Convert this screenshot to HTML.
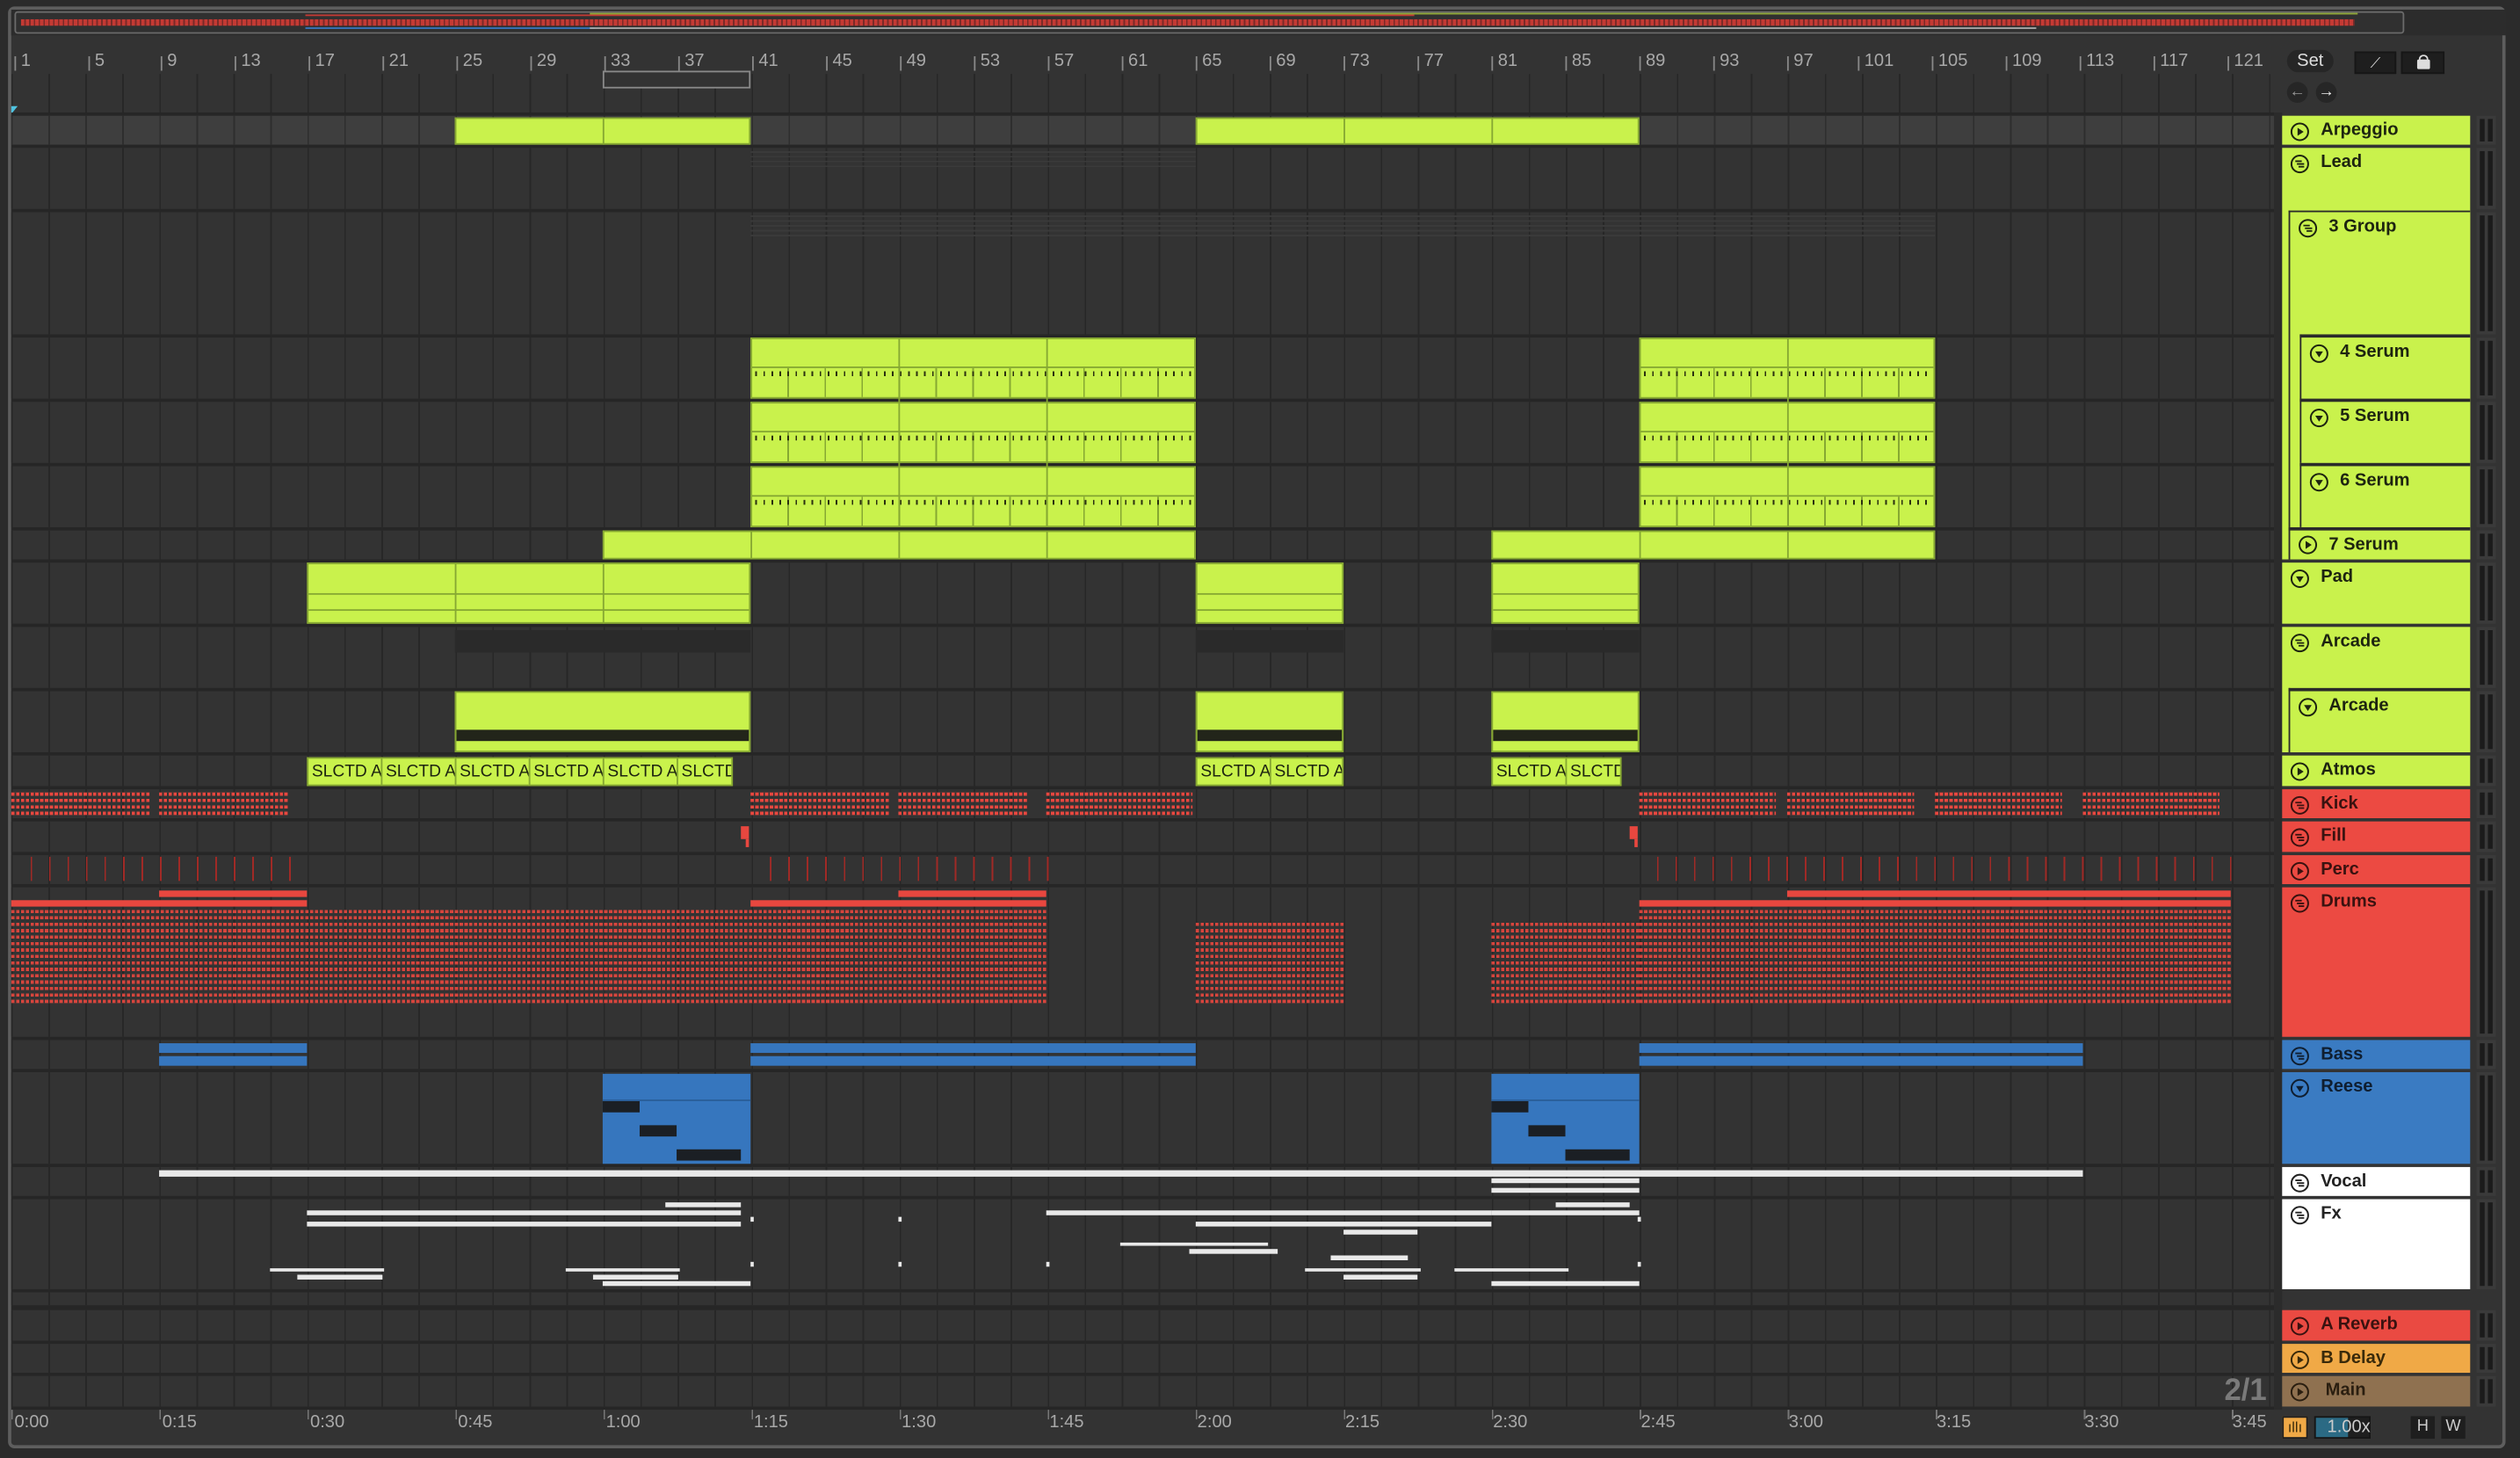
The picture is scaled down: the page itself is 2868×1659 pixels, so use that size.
<!DOCTYPE html>
<html><head><meta charset="utf-8"><style>
*{margin:0;padding:0;box-sizing:border-box}
html,body{width:2868px;height:1658px;overflow:hidden;background:#2b2b2b}
#s{position:absolute;left:0;top:0;width:1568px;height:907px;transform:scale(1.82908);transform-origin:0 0;background:#2b2b2b;font-family:"Liberation Sans",sans-serif}
.a{position:absolute}
.row{position:absolute;left:7px;width:1408px;background-color:#333;background-image:repeating-linear-gradient(to right,#272727 0 1px,transparent 1px 23.03px)}
.l{position:absolute;background:#c9f24c;border:1px solid #86a832}
.r{position:absolute;background:#e8473f}
.b{position:absolute;background:#3676be}
.w{position:absolute;background:#e9e9e9}
.h{position:absolute;font-weight:bold;font-size:11px;color:#1d2410;padding-left:24px;line-height:19px}
.h svg{position:absolute;left:5px;top:4px;width:12px;height:12px}
.m{position:absolute;left:1541px;width:12px;background:#3a3a3a}
.m:before,.m:after{content:"";position:absolute;top:2px;bottom:2px;width:3px;background:#1b1b1b}
.m:before{left:2px}.m:after{left:7px}
.rn{position:absolute;top:32px;font-size:11px;color:#a8a8a8}
.rn:before{content:"";position:absolute;left:-4px;top:3px;width:1px;height:9px;background:#888}
.tn{position:absolute;top:879px;font-size:11px;color:#a8a8a8}
.sl{position:absolute;top:471px;height:18px;background:#c9f24c;border:1px solid #86a832;font-size:10.5px;color:#1d2410;line-height:16px;padding-left:2px;overflow:hidden;white-space:nowrap}
.notes{position:absolute;left:0;right:0;bottom:0;height:19px;border-top:1px solid #86a832;background-image:repeating-linear-gradient(to right,transparent 0 2px,#2a3010 2px 3px,transparent 3px 5px),repeating-linear-gradient(to right,transparent 0 22px,#86a832 22px 23px);background-size:100% 3px,100% 100%;background-repeat:repeat-x,repeat;background-position:0 2px,0 0}
.dr{position:absolute;background-image:repeating-linear-gradient(to right,transparent 0 2px,#333 2px 3px),repeating-linear-gradient(to bottom,#e8473f 0 2px,transparent 2px 4px)}
.pc{position:absolute;top:533px;height:15px;background-image:repeating-linear-gradient(to right,#a02a26 0 1px,transparent 1px 11.5px)}
</style></head><body><div id="s">
<svg width="0" height="0" style="position:absolute">
<symbol id="p" viewBox="0 0 12 12"><circle cx="6" cy="6" r="5.2" fill="none" stroke="currentColor" stroke-width="1.1"/><path d="M4.6 3.5L8.4 6 4.6 8.5z" fill="currentColor"/></symbol>
<symbol id="g" viewBox="0 0 12 12"><circle cx="6" cy="6" r="5.2" fill="none" stroke="currentColor" stroke-width="1.1"/><path d="M3.2 4.3h4M4.2 6h4.5M5.2 7.7h3.5" stroke="currentColor" stroke-width="1"/></symbol>
<symbol id="d" viewBox="0 0 12 12"><circle cx="6" cy="6" r="5.2" fill="none" stroke="currentColor" stroke-width="1.1"/><path d="M3.6 4.6h4.8L6 8.3z" fill="currentColor"/></symbol>
</svg>
<!-- frame -->
<div class="a" style="left:5px;top:4px;width:1554px;height:897px;border:2px solid #5e5e5e;border-radius:4px;background:#333"></div>
<div class="a" style="left:7px;top:6px;width:1552px;height:16px;background:#2c2c2c"></div>
<!-- overview -->
<div class="a" style="left:9px;top:7px;width:1487px;height:14px;border:1px solid #6a6a6a;border-radius:2px;background:#303030"></div>
<div class="a" style="left:13px;top:12px;width:1452px;height:4px;background-image:repeating-linear-gradient(to right,#c43a34 0 2px,#7a2a28 2px 3px)"></div>
<div class="a" style="left:190px;top:9px;width:690px;height:1px;background:#c43a34"></div>
<div class="a" style="left:367px;top:9px;width:1100px;height:1px;background:#8fa838;top:8px"></div>
<div class="a" style="left:190px;top:17px;width:180px;height:1px;background:#3676be"></div>
<div class="a" style="left:367px;top:17px;width:900px;height:1px;background:#aaa"></div>
<!-- ruler -->
<div class="rn" style="left:13px">1</div><div class="rn" style="left:59px">5</div><div class="rn" style="left:104px">9</div><div class="rn" style="left:150px">13</div><div class="rn" style="left:196px">17</div><div class="rn" style="left:242px">21</div><div class="rn" style="left:288px">25</div><div class="rn" style="left:334px">29</div><div class="rn" style="left:380px">33</div><div class="rn" style="left:426px">37</div><div class="rn" style="left:472px">41</div><div class="rn" style="left:518px">45</div><div class="rn" style="left:564px">49</div><div class="rn" style="left:610px">53</div><div class="rn" style="left:656px">57</div><div class="rn" style="left:702px">61</div><div class="rn" style="left:748px">65</div><div class="rn" style="left:794px">69</div><div class="rn" style="left:840px">73</div><div class="rn" style="left:886px">77</div><div class="rn" style="left:932px">81</div><div class="rn" style="left:978px">85</div><div class="rn" style="left:1024px">89</div><div class="rn" style="left:1070px">93</div><div class="rn" style="left:1116px">97</div><div class="rn" style="left:1160px">101</div><div class="rn" style="left:1206px">105</div><div class="rn" style="left:1252px">109</div><div class="rn" style="left:1298px">113</div><div class="rn" style="left:1344px">117</div><div class="rn" style="left:1390px">121</div>
<div class="a" style="left:7px;top:46px;width:1408px;height:24px;background-image:repeating-linear-gradient(to right,#272727 0 1px,transparent 1px 23.03px)"></div>
<div class="a" style="left:375px;top:44px;width:92px;height:11px;border:1px solid #8a8a8a;background:#333"></div>
<div class="a" style="left:7px;top:66px;width:0;height:0;border-left:4px solid #4fc3e0;border-bottom:5px solid transparent"></div>
<!-- right controls -->
<div class="a" style="left:1423px;top:31px;width:29px;height:14px;border-radius:7px;background:#262626;color:#ddd;font-size:11px;text-align:center;line-height:14px">Set</div>
<div class="a" style="left:1465px;top:32px;width:26px;height:14px;background:#1e1e1e;border:1px solid #161616;color:#ddd;font-size:9px;text-align:center;line-height:12px">⟋</div>
<div class="a" style="left:1494px;top:32px;width:27px;height:14px;background:#1e1e1e;border:1px solid #161616"><div class="a" style="left:9px;top:4px;width:8px;height:6px;background:#ddd;border-radius:1px"></div><div class="a" style="left:10px;top:1px;width:6px;height:5px;border:1.5px solid #ddd;border-bottom:0;border-radius:3px 3px 0 0"></div></div>
<div class="a" style="left:1423px;top:51px;width:13px;height:13px;border-radius:50%;background:#262626;color:#999;font-size:10px;text-align:center;line-height:13px">←</div>
<div class="a" style="left:1441px;top:51px;width:13px;height:13px;border-radius:50%;background:#262626;color:#eee;font-size:10px;text-align:center;line-height:13px">→</div>
<!-- arrangement bg -->
<div class="a" style="left:7px;top:70px;width:1408px;height:807px;background:#262626"></div>
<div class="row" style="top:72px;height:18px;background-color:#3e3e3e;background-image:repeating-linear-gradient(to right,#2e2e2e 0 1px,transparent 1px 23.03px)"></div>
<div class="row" style="top:92px;height:38px"></div>
<div class="row" style="top:132px;height:76px"></div>
<div class="row" style="top:210px;height:38px"></div>
<div class="row" style="top:250px;height:38px"></div>
<div class="row" style="top:290px;height:38px"></div>
<div class="row" style="top:330px;height:18px"></div>
<div class="row" style="top:350px;height:38px"></div>
<div class="row" style="top:390px;height:38px"></div>
<div class="row" style="top:430px;height:38px"></div>
<div class="row" style="top:470px;height:19px"></div>
<div class="row" style="top:491px;height:18px"></div>
<div class="row" style="top:511px;height:19px"></div>
<div class="row" style="top:532px;height:18px"></div>
<div class="row" style="top:552px;height:93px"></div>
<div class="row" style="top:647px;height:18px"></div>
<div class="row" style="top:667px;height:57px"></div>
<div class="row" style="top:726px;height:18px"></div>
<div class="row" style="top:746px;height:56px"></div>
<div class="row" style="top:804px;height:8px"></div>
<div class="row" style="top:815px;height:19px"></div>
<div class="row" style="top:836px;height:18px"></div>
<div class="row" style="top:856px;height:19px"></div>
<div class="a" style="left:1415px;top:70px;width:5px;height:807px;background:#2b2b2b"></div>
<!-- faint lead -->
<div class="a" style="left:467px;top:94px;width:277px;height:12px;background:repeating-linear-gradient(to bottom,#3a3a3a 0 1px,transparent 1px 3px)"></div>
<div class="a" style="left:467px;top:134px;width:737px;height:14px;background:repeating-linear-gradient(to bottom,#3a3a3a 0 1px,transparent 1px 3px)"></div>
<div class="a" style="left:283px;top:392px;width:184px;height:14px;background:#2a2a2a"></div>
<div class="a" style="left:744px;top:392px;width:92px;height:14px;background:#2a2a2a"></div>
<div class="a" style="left:928px;top:392px;width:92px;height:14px;background:#2a2a2a"></div>
<!-- arpeggio -->
<div class="l" style="left:283px;top:73px;width:184px;height:17px"></div><div class="a" style="left:375px;top:73px;width:1px;height:17px;background:#86a832"></div>
<div class="l" style="left:744px;top:73px;width:276px;height:17px"></div><div class="a" style="left:836px;top:73px;width:1px;height:17px;background:#86a832"></div><div class="a" style="left:928px;top:73px;width:1px;height:17px;background:#86a832"></div>
<!-- serum 4 5 6 -->
<div class="l" style="left:467px;top:210px;width:277px;height:38px"><div class="notes"></div></div>
<div class="l" style="left:467px;top:250px;width:277px;height:38px"><div class="notes"></div></div>
<div class="l" style="left:467px;top:290px;width:277px;height:38px"><div class="notes"></div></div>
<div class="l" style="left:1020px;top:210px;width:184px;height:38px"><div class="notes"></div></div>
<div class="l" style="left:1020px;top:250px;width:184px;height:38px"><div class="notes"></div></div>
<div class="l" style="left:1020px;top:290px;width:184px;height:38px"><div class="notes"></div></div>
<div class="a" style="left:559px;top:210px;width:1px;height:118px;background:#86a832"></div><div class="a" style="left:651px;top:210px;width:1px;height:118px;background:#86a832"></div>
<div class="a" style="left:1112px;top:210px;width:1px;height:118px;background:#86a832"></div>
<!-- 7 serum -->
<div class="l" style="left:375px;top:330px;width:369px;height:18px"></div>
<div class="l" style="left:928px;top:330px;width:276px;height:18px"></div>
<div class="a" style="left:467px;top:330px;width:1px;height:18px;background:#86a832"></div><div class="a" style="left:559px;top:330px;width:1px;height:18px;background:#86a832"></div><div class="a" style="left:651px;top:330px;width:1px;height:18px;background:#86a832"></div><div class="a" style="left:1020px;top:330px;width:1px;height:18px;background:#86a832"></div><div class="a" style="left:1112px;top:330px;width:1px;height:18px;background:#86a832"></div>
<!-- pad -->
<div class="l" style="left:191px;top:350px;width:276px;height:38px;background-image:linear-gradient(#86a832,#86a832),linear-gradient(#86a832,#86a832);background-size:100% 1px,100% 1px;background-repeat:no-repeat;background-position:0 18px,0 28px"></div>
<div class="l" style="left:744px;top:350px;width:92px;height:38px;background-image:linear-gradient(#86a832,#86a832),linear-gradient(#86a832,#86a832);background-size:100% 1px,100% 1px;background-repeat:no-repeat;background-position:0 18px,0 28px"></div>
<div class="l" style="left:928px;top:350px;width:92px;height:38px;background-image:linear-gradient(#86a832,#86a832),linear-gradient(#86a832,#86a832);background-size:100% 1px,100% 1px;background-repeat:no-repeat;background-position:0 18px,0 28px"></div>
<div class="a" style="left:283px;top:350px;width:1px;height:38px;background:#86a832"></div><div class="a" style="left:375px;top:350px;width:1px;height:38px;background:#86a832"></div>
<!-- arcade sub -->
<div class="l" style="left:283px;top:430px;width:184px;height:38px;background-image:linear-gradient(#22251a,#22251a);background-size:100% 7px;background-repeat:no-repeat;background-position:0 23px"></div>
<div class="l" style="left:744px;top:430px;width:92px;height:38px;background-image:linear-gradient(#22251a,#22251a);background-size:100% 7px;background-repeat:no-repeat;background-position:0 23px"></div>
<div class="l" style="left:928px;top:430px;width:92px;height:38px;background-image:linear-gradient(#22251a,#22251a);background-size:100% 7px;background-repeat:no-repeat;background-position:0 23px"></div>
<!-- atmos -->
<div class="sl" style="left:191px;width:47px">SLCTD A</div><div class="sl" style="left:237px;width:47px">SLCTD A</div><div class="sl" style="left:283px;width:47px">SLCTD A</div><div class="sl" style="left:329px;width:47px">SLCTD A</div><div class="sl" style="left:375px;width:47px">SLCTD A</div><div class="sl" style="left:421px;width:35px">SLCTD</div>
<div class="sl" style="left:744px;width:47px">SLCTD A</div><div class="sl" style="left:790px;width:46px">SLCTD A</div>
<div class="sl" style="left:928px;width:47px">SLCTD A</div><div class="sl" style="left:974px;width:35px">SLCTD</div>
<!-- kick -->
<div class="dr" style="left:7px;top:493px;width:86px;height:14px"></div><div class="dr" style="left:99px;top:493px;width:80px;height:14px"></div>
<div class="dr" style="left:467px;top:493px;width:86px;height:14px"></div><div class="dr" style="left:559px;top:493px;width:80px;height:14px"></div><div class="dr" style="left:651px;top:493px;width:91px;height:14px"></div>
<div class="dr" style="left:1020px;top:493px;width:85px;height:14px"></div><div class="dr" style="left:1112px;top:493px;width:79px;height:14px"></div><div class="dr" style="left:1204px;top:493px;width:79px;height:14px"></div><div class="dr" style="left:1296px;top:493px;width:85px;height:14px"></div>
<!-- fill -->
<div class="r" style="left:461px;top:514px;width:5px;height:8px"></div><div class="r" style="left:464px;top:522px;width:2px;height:5px"></div>
<div class="r" style="left:1014px;top:514px;width:5px;height:8px"></div><div class="r" style="left:1017px;top:522px;width:2px;height:5px"></div>
<!-- perc -->
<div class="pc" style="left:19px;width:172px"></div><div class="pc" style="left:479px;width:180px"></div><div class="pc" style="left:1031px;width:360px"></div>
<!-- drums -->
<div class="r" style="left:99px;top:554px;width:92px;height:4px"></div><div class="r" style="left:559px;top:554px;width:92px;height:4px"></div><div class="r" style="left:1112px;top:554px;width:276px;height:4px"></div>
<div class="r" style="left:7px;top:560px;width:184px;height:4px"></div><div class="r" style="left:467px;top:560px;width:184px;height:4px"></div><div class="r" style="left:1020px;top:560px;width:368px;height:4px"></div>
<div class="dr" style="left:7px;top:566px;width:644px;height:58px;opacity:.9"></div>
<div class="dr" style="left:744px;top:574px;width:92px;height:50px;opacity:.9"></div>
<div class="dr" style="left:928px;top:574px;width:92px;height:50px;opacity:.9"></div>
<div class="dr" style="left:1020px;top:566px;width:368px;height:58px;opacity:.9"></div>
<!-- bass -->
<div class="b" style="left:99px;top:649px;width:92px;height:6px"></div><div class="b" style="left:99px;top:657px;width:92px;height:6px"></div>
<div class="b" style="left:467px;top:649px;width:277px;height:6px"></div><div class="b" style="left:467px;top:657px;width:277px;height:6px"></div>
<div class="b" style="left:1020px;top:649px;width:276px;height:6px"></div><div class="b" style="left:1020px;top:657px;width:276px;height:6px"></div>
<!-- reese -->
<div class="b" style="left:375px;top:668px;width:92px;height:56px"><div class="a" style="left:0;top:17px;width:23px;height:7px;background:#1b1f24"></div><div class="a" style="left:23px;top:32px;width:23px;height:7px;background:#1b1f24"></div><div class="a" style="left:46px;top:47px;width:40px;height:7px;background:#1b1f24"></div><div class="a" style="left:0;top:16px;width:92px;height:1px;background:#2a5e98"></div></div>
<div class="b" style="left:928px;top:668px;width:92px;height:56px"><div class="a" style="left:0;top:17px;width:23px;height:7px;background:#1b1f24"></div><div class="a" style="left:23px;top:32px;width:23px;height:7px;background:#1b1f24"></div><div class="a" style="left:46px;top:47px;width:40px;height:7px;background:#1b1f24"></div><div class="a" style="left:0;top:16px;width:92px;height:1px;background:#2a5e98"></div></div>
<!-- vocal -->
<div class="w" style="left:99px;top:728px;width:1197px;height:4px"></div>
<div class="w" style="left:928px;top:733px;width:92px;height:3px"></div><div class="w" style="left:928px;top:739px;width:92px;height:3px"></div>
<!-- fx -->
<div class="w" style="left:414px;top:748px;width:47px;height:3px"></div><div class="w" style="left:191px;top:753px;width:270px;height:3px"></div><div class="w" style="left:191px;top:760px;width:270px;height:3px"></div>
<div class="w" style="left:168px;top:789px;width:71px;height:2px"></div><div class="w" style="left:185px;top:793px;width:53px;height:3px"></div>
<div class="w" style="left:352px;top:789px;width:71px;height:2px"></div><div class="w" style="left:369px;top:793px;width:53px;height:3px"></div><div class="w" style="left:375px;top:797px;width:92px;height:3px"></div>
<div class="w" style="left:651px;top:753px;width:277px;height:3px"></div><div class="w" style="left:744px;top:760px;width:184px;height:3px"></div><div class="w" style="left:836px;top:765px;width:46px;height:3px"></div><div class="w" style="left:697px;top:773px;width:92px;height:2px"></div><div class="w" style="left:740px;top:777px;width:55px;height:3px"></div><div class="w" style="left:828px;top:781px;width:48px;height:3px"></div><div class="w" style="left:812px;top:789px;width:72px;height:2px"></div><div class="w" style="left:836px;top:793px;width:46px;height:3px"></div>
<div class="w" style="left:968px;top:748px;width:46px;height:3px"></div><div class="w" style="left:928px;top:753px;width:92px;height:3px"></div><div class="w" style="left:905px;top:789px;width:71px;height:2px"></div><div class="w" style="left:928px;top:797px;width:92px;height:3px"></div>
<div class="w" style="left:467px;top:757px;width:2px;height:3px"></div><div class="w" style="left:559px;top:757px;width:2px;height:3px"></div><div class="w" style="left:467px;top:785px;width:2px;height:3px"></div><div class="w" style="left:559px;top:785px;width:2px;height:3px"></div><div class="w" style="left:651px;top:785px;width:2px;height:3px"></div><div class="w" style="left:1019px;top:757px;width:2px;height:3px"></div><div class="w" style="left:1019px;top:785px;width:2px;height:3px"></div>
<!-- headers -->
<div class="h" style="left:1420px;top:72px;width:117px;height:18px;background:#c9f24c"><svg><use href="#p"/></svg>Arpeggio</div>
<div class="h" style="left:1420px;top:92px;width:117px;height:256px;background:#c9f24c"><svg><use href="#g"/></svg>Lead</div>
<div class="h" style="left:1424px;top:131px;width:113px;height:217px;background:#c9f24c;border-left:1px solid #2a2a2a;border-top:1px solid #2a2a2a"><svg><use href="#g"/></svg>3 Group</div>
<div class="h" style="left:1431px;top:208px;width:106px;height:40px;background:#c9f24c;border-left:1px solid #2a2a2a;border-top:2px solid #2a2a2a"><svg><use href="#d"/></svg>4 Serum</div>
<div class="h" style="left:1431px;top:248px;width:106px;height:40px;background:#c9f24c;border-left:1px solid #2a2a2a;border-top:2px solid #2a2a2a"><svg><use href="#d"/></svg>5 Serum</div>
<div class="h" style="left:1431px;top:288px;width:106px;height:40px;background:#c9f24c;border-left:1px solid #2a2a2a;border-top:2px solid #2a2a2a"><svg><use href="#d"/></svg>6 Serum</div>
<div class="h" style="left:1424px;top:328px;width:113px;height:20px;background:#c9f24c;border-left:1px solid #2a2a2a;border-top:2px solid #2a2a2a"><svg style="top:3px"><use href="#p"/></svg>7 Serum</div>
<div class="h" style="left:1420px;top:350px;width:117px;height:38px;background:#c9f24c"><svg><use href="#d"/></svg>Pad</div>
<div class="h" style="left:1420px;top:390px;width:117px;height:78px;background:#c9f24c"><svg><use href="#g"/></svg>Arcade</div>
<div class="h" style="left:1424px;top:428px;width:113px;height:40px;background:#c9f24c;border-left:1px solid #2a2a2a;border-top:2px solid #2a2a2a"><svg><use href="#d"/></svg>Arcade</div>
<div class="h" style="left:1420px;top:470px;width:117px;height:19px;background:#c9f24c"><svg><use href="#p"/></svg>Atmos</div>
<div class="h" style="left:1420px;top:491px;width:117px;height:18px;background:#ec4a42;color:#3a1210"><svg><use href="#g"/></svg>Kick</div>
<div class="h" style="left:1420px;top:511px;width:117px;height:19px;background:#ec4a42;color:#3a1210"><svg><use href="#g"/></svg>Fill</div>
<div class="h" style="left:1420px;top:532px;width:117px;height:18px;background:#ec4a42;color:#3a1210"><svg><use href="#p"/></svg>Perc</div>
<div class="h" style="left:1420px;top:552px;width:117px;height:93px;background:#ec4a42;color:#3a1210"><svg><use href="#g"/></svg>Drums</div>
<div class="h" style="left:1420px;top:647px;width:117px;height:18px;background:#3a7bc2;color:#0f1e30"><svg><use href="#g"/></svg>Bass</div>
<div class="h" style="left:1420px;top:667px;width:117px;height:57px;background:#3a7bc2;color:#0f1e30"><svg><use href="#d"/></svg>Reese</div>
<div class="h" style="left:1420px;top:726px;width:117px;height:18px;background:#fff;color:#222"><svg><use href="#g"/></svg>Vocal</div>
<div class="h" style="left:1420px;top:746px;width:117px;height:56px;background:#fff;color:#222"><svg><use href="#g"/></svg>Fx</div>
<div class="h" style="left:1420px;top:815px;width:117px;height:19px;background:#ea4a42;color:#3a1210"><svg><use href="#p"/></svg>A Reverb</div>
<div class="h" style="left:1420px;top:836px;width:117px;height:18px;background:#f0a946;color:#3a2a0a"><svg><use href="#p"/></svg>B Delay</div>
<div class="h" style="left:1420px;top:856px;width:117px;height:19px;background:#8f7150;color:#2a1e10;padding-left:27px"><svg><use href="#p"/></svg>Main</div>
<!-- meters -->
<div class="m" style="top:72px;height:18px"></div><div class="m" style="top:92px;height:38px"></div><div class="m" style="top:132px;height:76px"></div><div class="m" style="top:210px;height:38px"></div><div class="m" style="top:250px;height:38px"></div><div class="m" style="top:290px;height:38px"></div><div class="m" style="top:330px;height:18px"></div><div class="m" style="top:350px;height:38px"></div><div class="m" style="top:390px;height:38px"></div><div class="m" style="top:430px;height:38px"></div><div class="m" style="top:470px;height:19px"></div><div class="m" style="top:491px;height:18px"></div><div class="m" style="top:511px;height:19px"></div><div class="m" style="top:532px;height:18px"></div><div class="m" style="top:552px;height:93px"></div><div class="m" style="top:647px;height:18px"></div><div class="m" style="top:667px;height:57px"></div><div class="m" style="top:726px;height:18px"></div><div class="m" style="top:746px;height:56px"></div><div class="m" style="top:815px;height:19px"></div><div class="m" style="top:836px;height:18px"></div><div class="m" style="top:856px;height:19px"></div>
<!-- bottom -->
<div class="a" style="left:1384px;top:855px;font-size:19px;font-weight:bold;color:#7a7a7a">2/1</div>
<div class="tn" style="left:9px">0:00</div><div class="tn" style="left:101px">0:15</div><div class="tn" style="left:193px">0:30</div><div class="tn" style="left:285px">0:45</div><div class="tn" style="left:377px">1:00</div><div class="tn" style="left:469px">1:15</div><div class="tn" style="left:561px">1:30</div><div class="tn" style="left:653px">1:45</div><div class="tn" style="left:745px">2:00</div><div class="tn" style="left:837px">2:15</div><div class="tn" style="left:929px">2:30</div><div class="tn" style="left:1021px">2:45</div><div class="tn" style="left:1113px">3:00</div><div class="tn" style="left:1205px">3:15</div><div class="tn" style="left:1297px">3:30</div><div class="tn" style="left:1389px">3:45</div>
<div class="a" style="left:7px;top:877px;width:1408px;height:6px;background-image:repeating-linear-gradient(to right,#777 0 1px,transparent 1px 92.12px)"></div>
<div class="a" style="left:1420px;top:881px;width:16px;height:14px;background:#f0a946;border:1px solid #1e1e1e;color:#3a2a0a;font-size:9px;text-align:center;line-height:12px">ıllı</div>
<div class="a" style="left:1440px;top:881px;width:35px;height:14px;background:#1e1e1e;border:1px solid #161616;color:#ccc;font-size:11px;line-height:12px;padding-left:7px"><div class="a" style="left:0;top:0;width:20px;height:12px;background:#2e7d9e;opacity:.8"></div><span style="position:relative">1.00x</span></div>
<div class="a" style="left:1500px;top:881px;width:15px;height:14px;background:#1e1e1e;color:#ccc;font-size:10px;text-align:center;line-height:14px">H</div>
<div class="a" style="left:1519px;top:881px;width:15px;height:14px;background:#1e1e1e;color:#ccc;font-size:10px;text-align:center;line-height:14px">W</div>
</div></body></html>
